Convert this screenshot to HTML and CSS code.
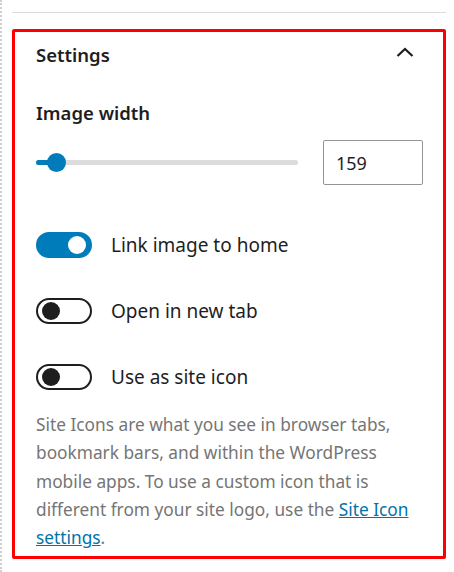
FILE: index.html
```html
<!DOCTYPE html>
<html lang="en">
<head>
  <meta charset="UTF-8">
  <meta name="viewport" content="width=device-width, initial-scale=1.0">
  <title>Site Logo settings</title>
  <link rel="stylesheet" href="styles.css">
</head>
<body>
  <div class="sidebar">
    <hr class="divider">

    <div class="panel">
      <div class="panel-header">
        <h2>Settings</h2>
        <svg class="chevron" width="18" height="10" viewBox="0 0 18 10">
          <path d="M1.5 9L9 2l7.5 7" fill="none" stroke="#1e1e1e" stroke-width="2.2"/>
        </svg>
      </div>

      <div class="panel-body">
        <div class="field-label">Image width</div>
        <div class="range-row">
          <div class="range">
            <div class="range-fill"></div>
            <div class="range-thumb"></div>
          </div>
          <input class="number" type="text" value="159">
        </div>

        <div class="toggles">
          <div class="toggle-row">
            <span class="toggle on"><span class="knob"></span></span>
            <span class="toggle-label">Link image to home</span>
          </div>
          <div class="toggle-row">
            <span class="toggle"><span class="knob"></span></span>
            <span class="toggle-label">Open in new tab</span>
          </div>
          <div class="toggle-row">
            <span class="toggle"><span class="knob"></span></span>
            <span class="toggle-label">Use as site icon</span>
          </div>
        </div>

        <p class="help">Site Icons are what you see in browser tabs, bookmark bars, and within the WordPress mobile apps. To use a custom icon that is different from your site logo, use the <a href="#">Site Icon settings</a>.</p>
      </div>
    </div>
  </div>
</body>
</html>
```

FILE: styles.css
```css
body {
  margin: 0;
  background: #fff;
  font-family: "Noto Sans", "Open Sans", sans-serif;
  color: #1e1e1e;
}
.sidebar {
  height: 572px;
  box-sizing: border-box;
  border-left: 2px dotted #cfcfcf;
  padding: 12px 8px 0 10px;
}
.divider {
  margin: 0;
  border: 0;
  border-top: 1px solid #dcdcdc;
}
.panel {
  margin-top: 16px;
  border: 3px solid #f00;
  border-radius: 2px;
  height: 530px;
  box-sizing: border-box;
  padding: 0 20px 0 21px;
}
.panel-header {
  height: 44px;
  display: flex;
  align-items: center;
  justify-content: space-between;
}
.panel-header h2 {
  margin: 0;
  font-size: 18.5px;
  font-weight: 600;
}
.chevron {
  margin-right: 9px;
  margin-top: -4px;
}
.panel-body {
  padding-top: 25px;
}
.field-label {
  font-size: 18.5px;
  font-weight: 600;
  line-height: 24px;
}
.range-row {
  margin-top: 15px;
  display: flex;
  align-items: center;
  justify-content: space-between;
}
.range {
  position: relative;
  width: 262px;
  height: 5px;
  border-radius: 3px;
  background: #dcdcde;
}
.range-fill {
  width: 20px;
  height: 5px;
  border-radius: 3px;
  background: #007cba;
}
.range-thumb {
  position: absolute;
  left: 11px;
  top: -7px;
  width: 19px;
  height: 19px;
  border-radius: 50%;
  background: #007cba;
}
.number {
  width: 100px;
  height: 45px;
  box-sizing: border-box;
  border: 1px solid #949494;
  border-radius: 2px;
  padding: 0 12px;
  font-family: inherit;
  font-size: 18px;
  color: #1e1e1e;
}
.toggles {
  margin-top: 46px;
  display: flex;
  flex-direction: column;
  gap: 38px;
}
.toggle-row {
  display: flex;
  align-items: center;
  gap: 19px;
  height: 28px;
}
.toggle {
  position: relative;
  width: 56px;
  height: 26px;
  box-sizing: border-box;
  border: 2px solid #1e1e1e;
  border-radius: 13px;
  background: #fff;
}
.toggle .knob {
  position: absolute;
  left: 4px;
  top: 2px;
  width: 18px;
  height: 18px;
  border-radius: 50%;
  background: #1e1e1e;
}
.toggle.on {
  background: #007cba;
  border-color: #007cba;
}
.toggle.on .knob {
  left: auto;
  right: 4px;
  background: #fff;
}
.toggle-label {
  font-size: 19px;
}
.help {
  margin: 20px 0 0;
  font-size: 17.3px;
  line-height: 28.3px;
  color: #757575;
}
.help a {
  color: #0073aa;
}
```
